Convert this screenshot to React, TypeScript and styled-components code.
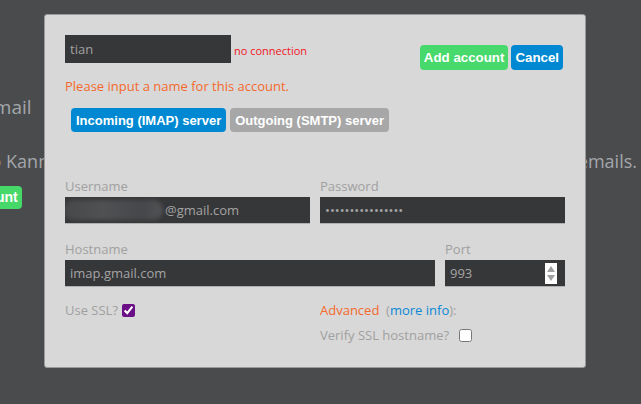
import { createGlobalStyle, styled } from "styled-components";

const GlobalStyle = createGlobalStyle`
	html, body {
		margin: 0;
		padding: 0;
		width: 100%;
		height: 100%;
		overflow: hidden;
		background: #4a4b4d;
		font-family: "Open Sans", "DejaVu Sans", sans-serif;
	}
	#root {
		height: 100%;
	}
`;

const Page = styled.div`
	position: relative;
	width: 100%;
	height: 100%;
	color: #a3a7ab;
	overflow: hidden;
`;

const Backdrop = styled.div`
	display: flex;
	flex-direction: column;
	padding-top: 95px;
	font-size: 18px;
`;

const Heading = styled.div`
	margin-left: -40px;
	font-size: 19px;
	line-height: 24px;
	white-space: nowrap;
`;

const Intro = styled.div`
	display: flex;
	justify-content: space-between;
	margin-top: 30px;
	line-height: 24px;
	white-space: nowrap;
	span:first-child {
		margin-left: -98px;
	}
	span:last-child {
		margin-right: 4px;
	}
`;

const BackButton = styled.div`
	align-self: flex-start;
	margin-top: 13px;
	margin-left: -71px;
	padding: 0 4px;
	height: 23px;
	line-height: 23px;
	border-radius: 4px;
	background: #47d86a;
	color: #fff;
	font-family: "Liberation Sans", Arial, sans-serif;
	font-weight: bold;
	font-size: 14px;
`;

const Modal = styled.div`
	position: absolute;
	left: 44px;
	top: 14px;
	width: 542px;
	height: 354px;
	box-sizing: border-box;
	padding: 20px 19px 0 20px;
	background: #d8d8d8;
	border: 1px solid #9a9a9a;
	border-radius: 3px;
	font-size: 13px;
	color: #a0a0a0;
`;

const TopRow = styled.div`
	display: flex;
	align-items: flex-start;
	height: 35px;
`;

const NameInput = styled.input`
	width: 166px;
	height: 28px;
	box-sizing: border-box;
	padding: 0 5px;
	border: none;
	background: #363739;
	color: #a0a0a0;
	font: 13px "Open Sans", sans-serif;
	outline: none;
`;

const Status = styled.span`
	margin: 8px 0 0 3px;
	font-size: 11px;
	color: #f0141e;
`;

const Actions = styled.div`
	display: flex;
	gap: 3px;
	margin: 10px 3px 0 auto;
`;

const Button = styled.button<{ $tone: "green" | "blue" | "gray" }>`
	height: 25px;
	padding: 0 4px;
	border: none;
	border-radius: 4px;
	background: ${p => (p.$tone === "green" ? "#47d96b" : p.$tone === "blue" ? "#0089d2" : "#a7a7a7")};
	color: #fff;
	font-family: "Liberation Sans", Arial, sans-serif;
	font-weight: bold;
	font-size: 13.3px;
	cursor: pointer;
`;

const Warning = styled.div`
	margin-top: 7px;
	line-height: 18px;
	color: #f5692c;
`;

const Tabs = styled.div`
	display: flex;
	gap: 4px;
	margin: 13px 0 0 6px;
	${Button} {
		height: 24px;
		padding: 0 5px;
		font-size: 13px;
	}
`;

const Grid = styled.div<{ $cols: string }>`
	display: grid;
	grid-template-columns: ${p => p.$cols};
	column-gap: 10px;
	width: 500px;
`;

const Field = styled.label`
	display: flex;
	flex-direction: column;
	position: relative;
	line-height: 18px;
	gap: 2px;
`;

const Input = styled.input`
	width: 100%;
	height: 27px;
	box-sizing: border-box;
	padding: 0 5px;
	border: none;
	border-bottom: 1px solid #b0b0b0;
	background: #363739;
	color: #a4a4a4;
	font: 13px "Open Sans", sans-serif;
	outline: none;
`;

const FakeInput = styled.div`
	display: flex;
	align-items: center;
	height: 27px;
	box-sizing: border-box;
	border-bottom: 1px solid #b0b0b0;
	background: #363739;
	color: #a4a4a4;
	overflow: hidden;
`;

const Smudge = styled.span`
	width: 100px;
	height: 20px;
	margin: 0 2px 0 -2px;
	border-radius: 10px;
	background: linear-gradient(90deg, #47484a, #505153 40%, #46474a 80%, #525355);
	filter: blur(2px);
`;

const Spinner = styled.span`
	position: absolute;
	right: 8px;
	bottom: 3px;
	width: 12px;
	height: 21px;
	background: #fff;
	display: flex;
	flex-direction: column;
	align-items: center;
	justify-content: center;
	gap: 3px;
	svg {
		display: block;
	}
`;

const Options = styled(Grid)`
	margin-top: 14px;
	line-height: 18px;
`;

const Line = styled.div`
	display: flex;
	align-items: center;
	gap: 4px;
	input {
		margin: 0;
		width: 13px;
		height: 13px;
		accent-color: #6b0f87;
	}
`;

const Orange = styled.span`
	color: #f5692c;
`;

const Link = styled.a`
	color: #0a88d6;
	text-decoration: none;
`;

const Verify = styled(Line)`
	margin-top: 7px;
	gap: 10px;
`;

export default function App() {
	return (
		<Page>
			<GlobalStyle />
			<Backdrop>
				<Heading>Kanmail</Heading>
				<Intro>
					<span>Welcome to Kanmail</span>
					<span>your emails.</span>
				</Intro>
				<BackButton>Add account</BackButton>
			</Backdrop>
			<Modal>
				<TopRow>
					<NameInput defaultValue="tian" />
					<Status>no connection</Status>
					<Actions>
						<Button $tone="green">Add account</Button>
						<Button $tone="blue">Cancel</Button>
					</Actions>
				</TopRow>
				<Warning>Please input a name for this account.</Warning>
				<Tabs>
					<Button $tone="blue">Incoming (IMAP) server</Button>
					<Button $tone="gray">Outgoing (SMTP) server</Button>
				</Tabs>
				<Grid $cols="1fr 1fr" style={{ marginTop: 45 }}>
					<Field>
						Username
						<FakeInput>
							<Smudge />
							@gmail.com
						</FakeInput>
					</Field>
					<Field>
						Password
						<Input type="password" defaultValue="xxxxxxxxxxxxxxxx" />
					</Field>
				</Grid>
				<Grid $cols="370px 120px" style={{ marginTop: 16 }}>
					<Field>
						Hostname
						<Input defaultValue="imap.gmail.com" />
					</Field>
					<Field>
						Port
						<Input defaultValue="993" />
						<Spinner>
							<svg width="8" height="6" viewBox="0 0 8 6">
								<path d="M4 0L8 6H0z" fill="#a0a0a0" />
							</svg>
							<svg width="8" height="6" viewBox="0 0 8 6">
								<path d="M0 0H8L4 6z" fill="#a0a0a0" />
							</svg>
						</Spinner>
					</Field>
				</Grid>
				<Options $cols="1fr 1fr">
					<div>
						<Line>
							Use SSL? <input type="checkbox" defaultChecked />
						</Line>
					</div>
					<div>
						<Line>
							<span>
								<Orange>Advanced</Orange>&nbsp; (<Link>more info</Link>):
							</span>
						</Line>
						<Verify>
							Verify SSL hostname? <input type="checkbox" />
						</Verify>
					</div>
				</Options>
			</Modal>
		</Page>
	);
}
